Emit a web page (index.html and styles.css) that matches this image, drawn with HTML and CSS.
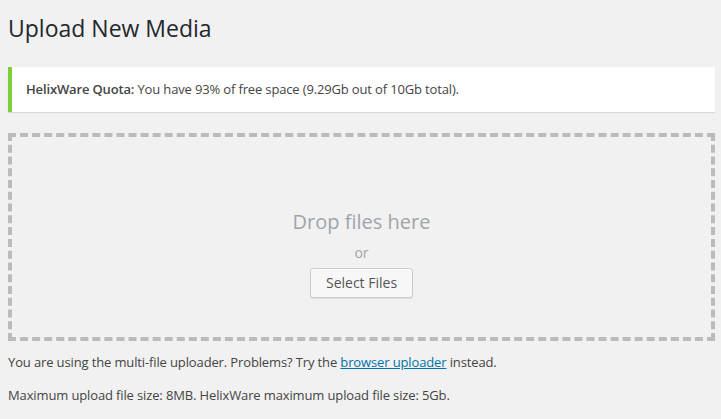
FILE: index.html
```html
<!DOCTYPE html>
<html lang="en">
<head>
<meta charset="utf-8">
<title>Upload New Media</title>
<link rel="stylesheet" href="styles.css">
</head>
<body>
<div class="wrap">
  <h1 class="page-title">Upload New Media</h1>
  <div class="notice notice-success">
    <p><strong>HelixWare Quota:</strong> You have 93% of free space (9.29Gb out of 10Gb total).</p>
  </div>
  <div class="drag-drop-area">
    <div class="drag-drop-inside">
      <p class="drag-drop-info">Drop files here</p>
      <p class="drag-drop-or">or</p>
      <p class="drag-drop-buttons"><button type="button" class="button">Select Files</button></p>
    </div>
  </div>
  <p class="upload-note">You are using the multi-file uploader. Problems? Try the <a href="#">browser uploader</a> instead.</p>
  <p class="upload-note">Maximum upload file size: 8MB. HelixWare maximum upload file size: 5Gb.</p>
</div>
</body>
</html>
```
FILE: styles.css
```css
html, body {
  margin: 0;
  padding: 0;
  background: #f1f1f1;
}
body {
  font-family: "Open Sans", "Liberation Sans", sans-serif;
  font-size: 13px;
  line-height: 1.5;
  color: #444;
}
.wrap {
  padding: 0 6px 0 8px;
}
.page-title {
  margin: 0;
  padding: 14px 0 0;
  font-size: 23px;
  font-weight: 400;
  line-height: 29px;
  color: #23282d;
}
.notice {
  margin: 24px 0 21px;
  background: #fff;
  border-left: 4px solid #7ad03a;
  box-shadow: 0 1px 1px 0 rgba(0, 0, 0, 0.1);
  padding: 0 12px;
}
.notice p {
  margin: 0;
  padding: 13px 2px;
  line-height: 19px;
  color: #444;
  letter-spacing: -0.15px;
}
.notice strong {
  font-weight: 600;
}
.drag-drop-area {
  border: 4px dashed #bbb;
  height: 200px;
}
.drag-drop-inside {
  padding-top: 70px;
  display: flex;
  flex-direction: column;
  align-items: center;
}
.drag-drop-inside p {
  margin: 0;
  text-align: center;
  color: #a0a5aa;
}
.drag-drop-info {
  font-size: 20px;
  line-height: 30px;
}
.drag-drop-or {
  margin-top: 5px !important;
  font-size: 14px;
  line-height: 21px;
}
.drag-drop-buttons {
  margin-top: 5px !important;
  line-height: 0;
}
.button {
  display: inline-block;
  height: 30px;
  margin: 0;
  padding: 0 15px 2px;
  font-family: inherit;
  font-size: 14px;
  line-height: 28px;
  color: #555;
  background: #f7f7f7;
  border: 1px solid #ccc;
  border-radius: 3px;
  box-shadow: inset 0 1px 0 #fff, 0 1px 0 rgba(0, 0, 0, 0.08);
  cursor: pointer;
}
.upload-note {
  margin: 12px 0 0;
  line-height: 19.5px;
  letter-spacing: -0.13px;
}
.upload-note + .upload-note {
  margin-top: 13px;
}
.upload-note a {
  color: #0073aa;
  text-decoration: underline;
}
```
